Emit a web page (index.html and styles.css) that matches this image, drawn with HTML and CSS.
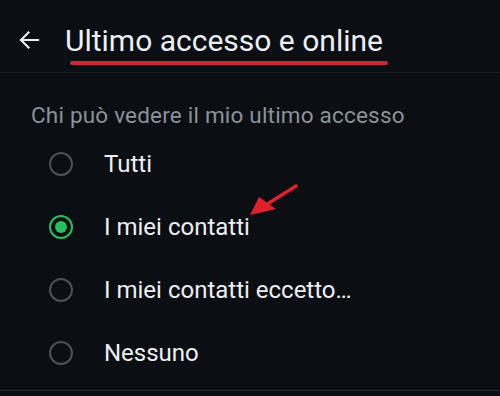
FILE: index.html
```html
<!DOCTYPE html>
<html lang="it">
<head>
<meta charset="utf-8">
<link rel="stylesheet" href="styles.css">
</head>
<body>
<div class="screen">
  <header class="topbar">
    <svg class="back" width="22" height="22" viewBox="0 0 22 22"><path d="M20 11H3M10.5 3.5L3 11l7.5 7.5" fill="none" stroke="#e9edef" stroke-width="2.2" stroke-linecap="square"/></svg>
    <h1 class="title">Ultimo accesso e online<span class="mark"></span></h1>
  </header>
  <section class="options">
    <p class="caption">Chi può vedere il mio ultimo accesso</p>
    <div class="row"><span class="radio"></span><span class="label">Tutti</span></div>
    <div class="row"><span class="radio on"></span><span class="label">I miei contatti</span></div>
    <div class="row"><span class="radio"></span><span class="label">I miei contatti eccetto…</span></div>
    <div class="row"><span class="radio"></span><span class="label">Nessuno</span></div>
  </section>
  <svg class="pointer" width="60" height="40" viewBox="0 0 60 40"><line x1="47" y1="2" x2="20" y2="19" stroke="#e3212b" stroke-width="3.5" stroke-linecap="round"/><polygon points="1,31 10,13 27,25" fill="#e3212b"/></svg>
</div>
</body>
</html>
```
FILE: styles.css
```css
* { box-sizing: border-box; margin: 0; padding: 0; }
html, body { background: #0b0e13; }
body { font-family: Roboto, "Noto Sans", sans-serif; color: #e9edef; }
.screen { position: relative; width: 500px; height: 396px; overflow: hidden; }
.topbar { height: 73px; display: flex; align-items: center; padding: 0 0 0 18px; border-bottom: 1px solid #1b1f24; }
.back { margin-top: 7px; }
.title { position: relative; margin-left: 25px; margin-top: 9px; font-weight: 400; font-size: 30px; color: #eceff1; line-height: 34px; }
.mark { position: absolute; left: 5px; right: -5px; bottom: -7px; height: 4px; border-radius: 2px; background: #d2252f; }
.options { border-bottom: 1px solid #262a30; padding-bottom: 6px; }
.caption { padding: 30px 0 0 31px; height: 59px; font-size: 22.5px; letter-spacing: 0.2px; line-height: 24px; color: #8b9299; }
.row { height: 63px; display: flex; align-items: center; padding-left: 49px; }
.radio { width: 24px; height: 24px; border-radius: 50%; border: 2.5px solid #4b5158; display: flex; align-items: center; justify-content: center; }
.radio.on { border-color: #22c15e; }
.radio.on::after { content: ""; width: 12px; height: 12px; border-radius: 50%; background: #22c15e; }
.label { margin-left: 31px; font-size: 24px; color: #eceff1; }
.pointer { position: absolute; left: 249px; top: 184px; }
```
